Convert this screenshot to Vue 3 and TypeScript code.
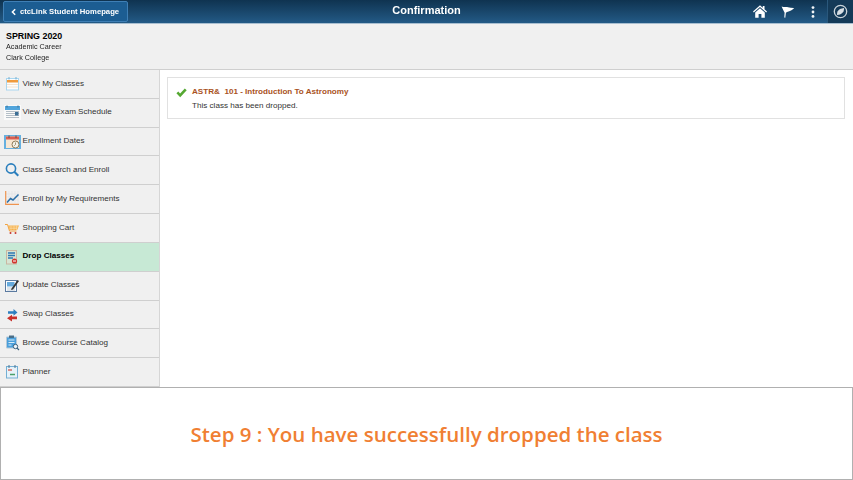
<script setup lang="ts">
const navItems = [
  { label: 'View My Classes', icon: 'classes' },
  { label: 'View My Exam Schedule', icon: 'exam' },
  { label: 'Enrollment Dates', icon: 'dates' },
  { label: 'Class Search and Enroll', icon: 'search' },
  { label: 'Enroll by My Requirements', icon: 'chart' },
  { label: 'Shopping Cart', icon: 'cart' },
  { label: 'Drop Classes', icon: 'drop', active: true },
  { label: 'Update Classes', icon: 'update' },
  { label: 'Swap Classes', icon: 'swap' },
  { label: 'Browse Course Catalog', icon: 'catalog' },
  { label: 'Planner', icon: 'planner' },
]
</script>

<template>
  <div class="page">
    <div class="screen">
      <header class="topbar">
        <button class="back">
          <svg width="8" height="8" viewBox="0 0 8 8"><path d="M5.200 1.200 2.400 4l2.800 2.800" fill="none" stroke="#fff" stroke-width="1.500" /></svg>
          <span>ctcLink Student Homepage</span>
        </button>
        <div class="title">Confirmation</div>
        <div class="actions">
          <svg class="home" width="14" height="13" viewBox="0 0 14 13">
            <path d="M7 .3 0 6.500l.8.900L7 2l6.200 5.400.8-.9-2.500-2.200V1H9.800v1.800z" fill="#fff" />
            <path d="M7 3.300 2.200 7.500V12.700H5.600V8.900H8.400V12.700H11.800V7.500z" fill="#fff" />
          </svg>
          <svg class="flag" width="14" height="12" viewBox="0 0 14 12">
            <path d="M.6.500C3 1.500 5 .8 7 1.200c2 .4 4 .8 6.200.7C11.500 3.500 9.500 4.800 7.500 5.500 6.500 5.800 5.500 6.200 4.900 6.800L4.300 11.800 3.300 11.500 3.600 6.800C2.500 4.500 1.400 2.500.6.500z" fill="#fff" />
          </svg>
          <svg class="dots" width="4" height="12" viewBox="0 0 4 12">
            <circle cx="2" cy="1.600" r="1.400" fill="#f2f5f7" /><circle cx="2" cy="6" r="1.400" fill="#f2f5f7" /><circle cx="2" cy="10.400" r="1.400" fill="#f2f5f7" />
          </svg>
          <div class="nav-btn">
            <svg width="15" height="15" viewBox="0 0 15 15">
              <circle cx="7.500" cy="7.500" r="6.200" fill="none" stroke="#c9d3da" stroke-width="1.300" />
              <path d="M11 4C8 4.300 5.500 5.500 4.500 7.500 4 8.800 4 10 4 11 7 10.800 9.500 9.500 10.500 7.500 11 6.300 11 5 11 4z" fill="#d6dee4" />
            </svg>
          </div>
        </div>
      </header>

      <section class="term">
        <div class="term-name">SPRING 2020</div>
        <div class="term-line">Academic Career</div>
        <div class="term-line">Clark College</div>
      </section>

      <div class="body">
        <nav class="side">
          <a v-for="item in navItems" :key="item.label" class="row" :class="{ active: item.active }">
            <span class="ico">
              <svg width="20" height="20" viewBox="0 0 20 20">
                <template v-if="item.icon === 'classes'">
                  <rect x="4.500" y="4.500" width="12" height="11.500" fill="#fdfdfd" stroke="#a9d6f0" />
                  <rect x="5" y="6" width="11" height="2.500" fill="#f09a3c" />
                  <path d="M7 3v2.500M14 3v2.500" stroke="#7ab2d2" />
                  <path d="M5 10.500h11M5 13h11" stroke="#f5e3cf" />
                </template>
                <template v-else-if="item.icon === 'exam'">
                  <rect x="2" y="2" width="17" height="15" fill="#fafafa" />
                  <rect x="3" y="3" width="15" height="4" fill="#52a5dc" />
                  <path d="M5 2.500v2M16 2.500v2" stroke="#3e6f8e" />
                  <path d="M4 8.500h13M4 10.500h13M4 12.500h13M4 14.500h13" stroke="#b5bfc7" />
                  <rect x="13" y="9" width="3.500" height="3.500" fill="#3c6f96" />
                </template>
                <template v-else-if="item.icon === 'dates'">
                  <rect x="2" y="3" width="17" height="14" fill="#67b0df" />
                  <rect x="4" y="4.500" width="13" height="11.500" fill="#f8e7d2" />
                  <rect x="4" y="4.500" width="13" height="3" fill="#dc5e50" />
                  <path d="M7 3.500v2.500M14 3.500v2.500" stroke="#555" />
                  <circle cx="13.500" cy="12.500" r="3.500" fill="#f4f1e6" stroke="#8d7a55" />
                  <path d="M13.500 10.500v2l-1.300 1.300" fill="none" stroke="#8d7a55" stroke-width=".8" />
                </template>
                <template v-else-if="item.icon === 'search'">
                  <circle cx="9" cy="8.500" r="4.600" fill="none" stroke="#2b7fbd" stroke-width="1.600" />
                  <path d="m12.300 11.800 4 4" stroke="#2b7fbd" stroke-width="2" />
                </template>
                <template v-else-if="item.icon === 'chart'">
                  <path d="M7 2v12M10 2v12M13 2v12M16 2v12M4 5h13M4 8h13M4 11h13" stroke="#dfe1e5" stroke-width=".6" />
                  <path d="M3.700 2v13.300H17" fill="none" stroke="#ee9450" stroke-width="1.200" />
                  <path d="m5 13.500 3.500-4 2.500 1.500L16.500 5.500" fill="none" stroke="#2a6fa8" stroke-width="1.500" />
                </template>
                <template v-else-if="item.icon === 'cart'">
                  <path d="M3 6.500h2.500l2 6.500h7" fill="none" stroke="#f19a2c" stroke-width=".9" />
                  <path d="M6 7.500h11l-1.800 4.500H7.500z" fill="#f6b14b" />
                  <path d="M7 9h9M7.500 10.500h7.500M9 7.500v4.500M12 7.500v4.500M14.500 7.500v4.500" stroke="#fbe2ba" stroke-width=".5" />
                  <circle cx="8.500" cy="15" r="1" fill="#c8342b" /><circle cx="13.500" cy="15" r="1" fill="#c8342b" />
                </template>
                <template v-else-if="item.icon === 'drop'">
                  <rect x="4.500" y="3.500" width="10" height="13.500" fill="#d8e4d3" stroke="#c9b7a2" />
                  <path d="M6 6h7M6 8.500h7M6 11h5" stroke="#2d78b4" stroke-width="1.300" />
                  <circle cx="12.500" cy="14" r="2.600" fill="#d0342c" />
                  <path d="M11 14h3" stroke="#fff" />
                </template>
                <template v-else-if="item.icon === 'update'">
                  <rect x="3.500" y="4.500" width="11" height="11" fill="#fbfdff" stroke="#5b7aa0" />
                  <rect x="5" y="6" width="7.500" height="4.500" fill="#65a9dc" />
                  <path d="M5 12h8M5 14h8" stroke="#c2ccd6" />
                  <path d="m9.500 12.500 6-8.500 1.500 1-6 8.500-2 .5z" fill="#333" />
                </template>
                <template v-else-if="item.icon === 'swap'">
                  <path d="M6 6.200h5.500V4L15.500 7.400 11.500 10.800V8.800H6z" fill="#2d7fc0" />
                  <path d="M15 11.500H10V9.700L5 13.200 10 16.500V14.300h5z" fill="#c9312b" />
                </template>
                <template v-else-if="item.icon === 'catalog'">
                  <path d="M4.500 4h10v11h-10z" fill="#4a9fdb" stroke="#b5c9d8" />
                  <path d="M6.500 7h6M6.500 9.500h6M6.500 12h3" stroke="#d7ecf9" />
                  <rect x="7" y="2.500" width="5" height="2.500" fill="#4a6e88" />
                  <circle cx="13.500" cy="13.500" r="2.200" fill="#eef5fa" stroke="#39617e" />
                  <path d="m15 15 2 2" stroke="#39617e" stroke-width="1.100" />
                </template>
                <template v-else>
                  <rect x="4.500" y="4.500" width="11" height="11.500" fill="#e6f2f9" stroke="#74afd4" />
                  <path d="M7 3v3M13 3v3" stroke="#4a7492" />
                  <path d="M6 8h4" stroke="#d0483c" stroke-width="1.200" />
                  <path d="M8 12.500h5" stroke="#4aa06a" stroke-width="1.500" />
                </template>
              </svg>
            </span>
            <span class="label">{{ item.label }}</span>
          </a>
        </nav>

        <main class="content">
          <div class="card">
            <svg class="check" width="11" height="10" viewBox="0 0 11 10">
              <path d="M.4 5.300 2.300 3.600 4.100 5.400 8.800.6 10.700 2.300 4.200 9.300z" fill="#55a832" />
            </svg>
            <div>
              <div class="course">ASTR&amp;&nbsp; 101 - Introduction To Astronomy</div>
              <div class="note">This class has been dropped.</div>
            </div>
          </div>
        </main>
      </div>
    </div>

    <footer class="step">Step 9 : You have successfully dropped the class</footer>
  </div>
</template>

<style scoped>
.page {
  width: 853px;
  height: 480px;
  display: flex;
  flex-direction: column;
  overflow: hidden;
  background: #fff;
  font-family: 'Liberation Sans', Arial, sans-serif;
}

.screen {
  height: 387px;
  flex: none;
  filter: blur(0.3px);
}

.topbar {
  height: 23px;
  display: flex;
  align-items: center;
  position: relative;
  background: linear-gradient(#0f3350 0%, #235a86 100%);
  border-bottom: 1px solid #a8bed0;
}

.back {
  margin-left: 3px;
  width: 125px;
  height: 21px;
  padding: 0 0 0 6px;
  display: flex;
  align-items: center;
  gap: 2px;
  background: #1c5d92;
  border: 1px solid #3f7fb5;
  border-radius: 2px;
  color: #fff;
  font-family: inherit;
  font-size: 7.700px;
  font-weight: 700;
  white-space: nowrap;
}

.title {
  position: absolute;
  left: 0;
  right: 0;
  top: 4px;
  text-align: center;
  color: #fff;
  font-size: 11px;
  line-height: 13px;
  font-weight: 700;
  pointer-events: none;
}

.actions {
  margin-left: auto;
  display: flex;
  align-items: center;
  height: 100%;
}

.home { margin-right: 14px; }
.flag { margin-right: 16px; }
.dots { margin-right: 12px; }

.nav-btn {
  width: 25px;
  height: 23px;
  display: flex;
  align-items: center;
  justify-content: center;
  background: #143a58;
  border-left: 1px solid #2a587c;
}

.term {
  height: 46px;
  box-sizing: border-box;
  padding: 7px 6px 0;
  background: #f0f0f0;
  border-bottom: 1px solid #cfcfcf;
  color: #222;
}

.term-name {
  font-size: 8.900px;
  font-weight: 700;
  line-height: 11px;
  color: #000;
}

.term-line {
  font-size: 7.200px;
  line-height: 11px;
  position: relative;
  top: -1px;
}

.body {
  height: 317px;
  display: flex;
}

.side {
  width: 160px;
  flex: none;
  box-sizing: border-box;
  background: #f0f0f0;
  border-right: 1px solid #d6d6d6;
}

.row {
  height: 28.820px;
  box-sizing: border-box;
  display: flex;
  align-items: flex-start;
  padding-top: 7.500px;
  border-bottom: 1px solid #cfcfcf;
  color: #333;
  font-size: 8.100px;
}

.row.active {
  background: #c7e9d5;
  color: #000;
  font-weight: 700;
}

.ico {
  width: 22.500px;
  margin-top: -3.500px;
  flex: none;
  display: flex;
  padding-left: 2px;
  box-sizing: border-box;
}

.label {
  line-height: 11px;
  white-space: nowrap;
}

.content {
  flex: 1;
  padding: 7px 8px 0 7px;
  background: #fff;
}

.card {
  height: 42px;
  box-sizing: border-box;
  display: flex;
  padding: 8px 0 0 8px;
  gap: 5px;
  border: 1px solid #e1e1e1;
}

.check {
  margin-top: 2px;
  flex: none;
}

.course {
  font-size: 8.100px;
  font-weight: 700;
  line-height: 11px;
  color: #a9521d;
}

.note {
  margin-top: 3px;
  font-size: 8.100px;
  line-height: 11px;
  color: #333;
}

.step {
  flex: 1;
  display: flex;
  align-items: center;
  justify-content: center;
  padding-top: 1px;
  box-sizing: border-box;
  border: 1px solid #b0b0b0;
  background: #fff;
  color: #f07f33;
  font-family: 'Open Sans', 'Noto Sans', sans-serif;
  font-size: 20.500px;
  font-weight: 600;
}
</style>
